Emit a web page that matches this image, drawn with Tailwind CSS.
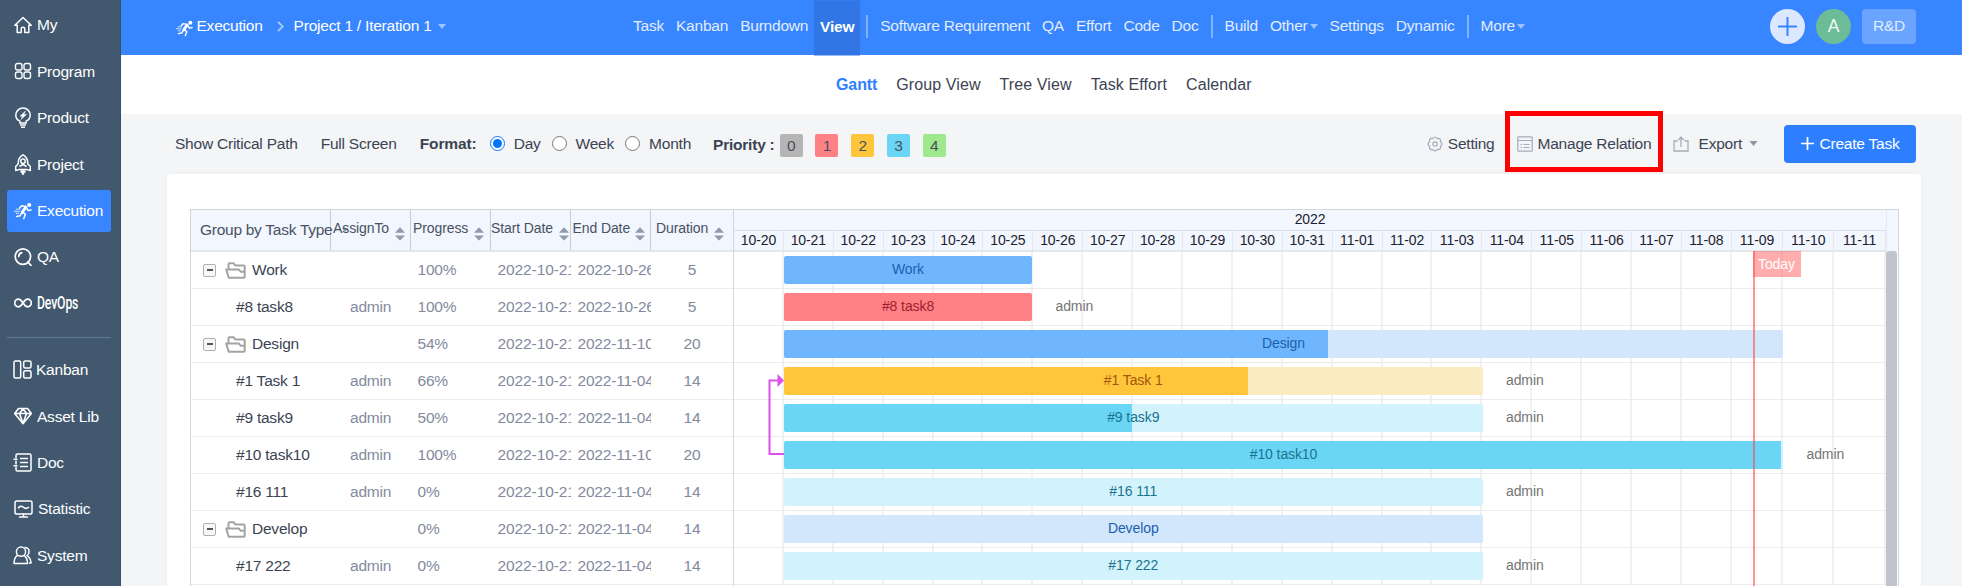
<!DOCTYPE html>
<html lang="en">
<head>
    <meta charset="UTF-8">
    <meta name="viewport" content="width=device-width, initial-scale=1.0">
    <title>Gantt - Project 1 / Iteration 1</title>
    <script src="https://cdn.jsdelivr.net/npm/@tailwindcss/browser@4"></script>
</head>
<body class="bg-[#f3f5f7] font-['Liberation_Sans',Arial,sans-serif] text-[15.5px] tracking-[-0.22px] text-[#3c4353] h-[586px] overflow-hidden">
    <!-- Shared icons -->
    <svg class="hidden">
        <symbol id="icon-run" viewBox="0 0 18 18">
            <circle cx="15.2" cy="3" r="2.1" fill="currentColor"/>
            <path d="M11.8 5.2 8.2 10.4" fill="none" stroke="currentColor" stroke-width="3" stroke-linecap="round"/>
            <path d="M11.6 4.6 7.6 3.8 5.6 6M12.6 6l1.600 2.600 2.800-.6M9 10.400l2.400 2-1.600 4.200M7.800 11 6 13.800l-3.400.6" fill="none" stroke="currentColor" stroke-width="1.500" stroke-linecap="round" stroke-linejoin="round"/>
            <path d="M1.800 7.200h4.400M0 9.300h5.800M2 11.400h3" stroke="currentColor" stroke-width=".8"/>
        </symbol>
        <symbol id="icon-sort" viewBox="0 0 10 14">
            <path d="M5 .3 10 5.800H0zM5 13.500 10 8.400H0z" fill="#8f9aac"/>
        </symbol>
        <symbol id="icon-caret" viewBox="0 0 8 5">
            <path d="M0 0h8L4 5z" fill="currentColor"/>
        </symbol>
        <symbol id="icon-folder" viewBox="0 0 21 17">
            <path d="M3.500 7.200V2.300q0-1 1-1h4.200l1.800 2.200h8q1.200 0 1.200 1v10.200q0 1-1 1H3.700L1.200 7.400h12.600l2 2.400h3.700" fill="none" stroke="#a3a3a3" stroke-width="2" stroke-linejoin="round"/>
        </symbol>
    </svg>

    <div class="flex h-full">
        <!-- Sidebar -->
        <aside class="w-[120.5px] shrink-0 bg-[#41586f] border-r border-[#36506b] text-white px-[7px] pt-1">
            <nav class="flex flex-col gap-[4.4px]">
                <a class="flex h-[42px] items-center gap-[5px] pl-[7px]">
                    <svg class="size-[18px]" viewBox="0 0 18 18" fill="none" stroke="currentColor" stroke-width="1.5" stroke-linejoin="round" stroke-linecap="round"><path d="M.8 9.300 9 1.500l8.200 7.800h-2.400v7.200h-4v-3.700q0-1.600-1.800-1.600t-1.800 1.600v3.700h-4V9.300z"/></svg>My
                </a>
                <a class="flex h-[42px] items-center gap-[5px] pl-[7px]">
                    <svg class="size-[18px]" viewBox="0 0 18 18" fill="none" stroke="currentColor" stroke-width="1.4"><rect x="1.500" y="1.500" width="6.500" height="6.500" rx="2"/><rect x="10" y="1.500" width="6.500" height="6.500" rx="2"/><rect x="1.500" y="10" width="6.500" height="6.500" rx="2"/><rect x="10" y="10" width="6.500" height="6.500" rx="2"/></svg>Program
                </a>
                <a class="flex h-[42px] items-center gap-[5px] pl-[7px]">
                    <svg class="h-[21px] w-[18px]" viewBox="0 0 18 21" fill="none" stroke="currentColor" stroke-width="1.5"><path d="M5.900 16v-1.800Q1.800 12.200 1.800 8.200A7.200 7.200 0 0 1 16.200 8.200q0 4-4.100 6V16z"/><path d="M6 18h6M7 20.200h4" stroke-width="1.600"/><path d="M11.500 4 6 9.200h2.600L7 12.400l5.600-5H9.800z" fill="currentColor" stroke-width=".5"/></svg>Product
                </a>
                <a class="flex h-[42px] items-center gap-[5px] pl-[7px]">
                    <svg class="h-[21px] w-[18px]" viewBox="0 0 18 21" fill="none" stroke="currentColor" stroke-width="1.500" stroke-linejoin="round"><path d="M9 .8Q4.300 3.400 4.300 8.200v1.600L1.700 12.500v4L5 15.600h8l3.300.9v-4l-2.600-2.700V8.200Q13.700 3.400 9 .8z"/><circle cx="9" cy="7.200" r="2.200"/><path d="M5.400 12.500 9 10.500l3.600 2"/><path d="M6.500 17.500h5M9 17.500v3.200" stroke-width="2.400"/></svg>Project
                </a>
                <a class="flex h-[42px] w-[104px] items-center gap-[5px] rounded-[3px] bg-[#3785ff] pl-[7px]">
                    <svg class="size-[18px]"><use href="#icon-run"/></svg>Execution
                </a>
                <a class="flex h-[42px] items-center gap-[5px] pl-[7px]">
                    <svg class="size-[18px]" viewBox="0 0 18 18" fill="none" stroke="currentColor" stroke-width="1.700" stroke-linecap="round"><circle cx="8.900" cy="8.600" r="7.700"/><path d="m13.800 14 3.200 3.300M4.700 8.400q.2-3 3-3.800" /></svg>QA
                </a>
                <a class="flex h-[42px] items-center gap-[5px] pl-[7px]">
                    <svg class="h-[10px] w-[18px] shrink-0" viewBox="0 0 18 10" fill="none" stroke="currentColor" stroke-width="1.700"><path d="M9 5Q6.500 1.200 4.300 1.200a3.600 3.800 0 0 0 0 7.600Q6.500 8.800 9 5t4.700-3.800a3.600 3.800 0 0 1 0 7.600Q11.500 8.800 9 5z"/></svg>
                    <span class="origin-left scale-x-[0.7] font-['Roboto',sans-serif] text-[17.5px] font-medium">DevOps</span>
                </a>
            </nav>
            <div class="mt-[12.6px] mb-[11px] h-px w-[104px] bg-[#627a93]"></div>
            <nav class="flex flex-col gap-[4.4px]">
                <a class="flex h-[42px] items-center gap-1 pl-1.5">
                    <svg class="size-[19px]" viewBox="0 0 19 19" fill="none" stroke="currentColor" stroke-width="1.500"><rect x="1" y="1" width="6.700" height="17" rx="1.500"/><rect x="10.700" y="1" width="7.300" height="7" rx="1.500"/><rect x="10.700" y="10.700" width="7.300" height="7.300" rx="1.500"/></svg>Kanban
                </a>
                <a class="flex h-[42px] items-center gap-[5px] pl-[7px]">
                    <svg class="size-[18px]" viewBox="0 0 18 18" fill="none" stroke="currentColor" stroke-width="1.600" stroke-linejoin="round"><path d="M4.500 1.500h9L17.300 6.500 9 16.700.7 6.500zM1 6.500h16M9 16.500 5.500 6.500 9 1.700l3.500 4.800z"/></svg>Asset Lib
                </a>
                <a class="flex h-[42px] items-center gap-[5px] pl-[6px]">
                    <svg class="size-[19px]" viewBox="0 0 19 19" fill="none" stroke="currentColor" stroke-width="1.500"><path d="M3 5V2.500Q3 1 4.500 1h12Q18 1 18 2.500v14q0 1.500-1.500 1.500h-12Q3 18 3 16.500V14M3 7.500v4M.5 6.200h4M.5 12.800h4M7 5.500h8M7 9.500h8M7 13.500h8"/></svg>Doc
                </a>
                <a class="flex h-[42px] items-center gap-[5px] pl-[7px]">
                    <svg class="h-[18px] w-[19px]" viewBox="0 0 19 18" fill="none" stroke="currentColor" stroke-width="1.500" stroke-linecap="round"><rect x="1" y="1" width="17" height="13" rx="1.800"/><path d="M4.500 7.800q2.200-2.800 4.600-.8 2.800 2.600 5.400.2M9.500 14v2.800M5.500 17h8"/></svg>Statistic
                </a>
                <a class="flex h-[42px] items-center gap-[5px] pl-[6px]">
                    <svg class="size-[19px]" viewBox="0 0 19 19" fill="none" stroke="currentColor" stroke-width="1.500" stroke-linejoin="round"><circle cx="8" cy="5.700" r="4.600"/><path d="M4.700 9.200Q1 11.500 1 17.500h13.500q0-6-4-8.300M11.500 1.600q4.400 0 4.600 3.900 0 2.600-2 4.200 3.500 2.200 4 7.300H16"/></svg>System
                </a>
            </nav>
        </aside>

        <main class="flex min-w-0 flex-1 flex-col">
            <!-- Header -->
            <header class="flex h-[55px] shrink-0 items-center bg-[#3785ff] pb-[3px] text-[#e1ecff]">
                <div class="flex w-[512.5px] shrink-0 items-center pl-[55px] text-white">
                    <svg class="mt-1 mr-1 size-[17px]"><use href="#icon-run"/></svg>
                    <span>Execution</span>
                    <svg class="ml-[14px] mr-[10px] h-[11px] w-[7px]" viewBox="0 0 7 11" fill="none" stroke="#a9caff" stroke-width="1.800"><path d="m1 .8 4.800 4.700L1 10.200"/></svg>
                    <span>Project 1 / Iteration 1</span>
                    <svg class="ml-1.5 h-[5px] w-2 text-[#9cc2ff]"><use href="#icon-caret"/></svg>
                </div>
                <nav class="flex h-[52px] items-center gap-[12px] whitespace-nowrap">
                    <a>Task</a>
                    <a>Kanban</a>
                    <a>Burndown</a>
                    <a class="-mx-[6px] flex h-[55px] w-[46px] translate-y-[1.5px] items-center justify-center bg-[#3176e4] pb-[3px] font-bold text-white">View</a>
                    <span class="h-[23px] w-0.5 bg-[#83b2ff]"></span>
                    <a>Software Requirement</a>
                    <a>QA</a>
                    <a>Effort</a>
                    <a>Code</a>
                    <a>Doc</a>
                    <span class="h-[23px] w-0.5 bg-[#83b2ff]"></span>
                    <a>Build</a>
                    <a class="flex items-center gap-0.5">Other<svg class="h-[5px] w-2 text-[#9cc2ff]"><use href="#icon-caret"/></svg></a>
                    <a>Settings</a>
                    <a>Dynamic</a>
                    <span class="h-[23px] w-0.5 bg-[#83b2ff]"></span>
                    <a class="flex items-center gap-0.5">More<svg class="h-[5px] w-2 text-[#9cc2ff]"><use href="#icon-caret"/></svg></a>
                </nav>
                <div class="ml-auto flex items-center gap-[11px] pr-[46px]">
                    <span class="flex size-[35px] items-center justify-center rounded-full bg-[#dbe8ff]">
                        <svg class="size-[19px]" viewBox="0 0 19 19" stroke="#3785ff" stroke-width="2"><path d="M9.500 0v19M0 9.500h19"/></svg>
                    </span>
                    <span class="flex size-[35px] items-center justify-center rounded-full bg-[#6cbc97] text-[17.5px] text-[#eef8f3]">A</span>
                    <span class="flex h-[35px] w-[54px] items-center justify-center rounded bg-[#6ba4ff]">R&amp;D</span>
                </div>
            </header>

            <!-- Sub navigation -->
            <nav class="flex h-[59px] shrink-0 items-center gap-[19px] bg-white pl-[715.5px] text-base tracking-[0.1px]">
                <a class="font-bold tracking-[-0.1px] text-[#2e7fff]">Gantt</a>
                <a>Group View</a>
                <a>Tree View</a>
                <a>Task Effort</a>
                <a>Calendar</a>
            </nav>

            <!-- Toolbar -->
            <div class="flex h-[60px] shrink-0 items-center whitespace-nowrap pr-[46px] pb-px pl-[54.5px]">
                <a>Show Critical Path</a>
                <a class="ml-[23px]">Full Screen</a>
                <b class="ml-[23px] tracking-[-0.1px]">Format:</b>
                <span class="ml-[13px] flex size-[15px] items-center justify-center rounded-full border-[1.500px] border-[#0b76ff] bg-white"><span class="size-[9px] rounded-full bg-[#0075ff]"></span></span>
                <span class="ml-[9px]">Day</span>
                <span class="ml-[11px] size-[15px] rounded-full border border-[#767676] bg-white"></span>
                <span class="ml-[9px]">Week</span>
                <span class="ml-[11px] size-[15px] rounded-full border border-[#767676] bg-white"></span>
                <span class="ml-[9px]">Month</span>
                <b class="ml-[22px] pt-0.5">Priority :</b>
                <div class="ml-[5px] flex gap-[12.800px] pt-[3px] leading-[23px] text-[#4a4f5c]">
                    <span class="w-[23px] rounded-[2px] bg-[#b5b5b5] text-center">0</span>
                    <span class="w-[23px] rounded-[2px] bg-[#ff8085] text-center">1</span>
                    <span class="w-[23px] rounded-[2px] bg-[#ffc63c] text-center">2</span>
                    <span class="w-[23px] rounded-[2px] bg-[#6ad5f5] text-center">3</span>
                    <span class="w-[23px] rounded-[2px] bg-[#9fe88d] text-center">4</span>
                </div>

                <div class="ml-auto flex items-center">
                    <svg class="mr-[5px] size-4" viewBox="0 0 16 16" fill="none" stroke="#a5acb9" stroke-width="1.200" stroke-linejoin="round"><path d="M13.450 10.260Q14.080 14.080 10.260 13.450 8 16.600 5.740 13.450 1.920 14.080 2.550 10.260-.6 8 2.550 5.740 1.920 1.920 5.740 2.550 8-.6 10.260 2.550 14.080 1.920 13.450 5.740 16.600 8 13.450 10.260z"/><circle cx="8" cy="8" r="2.200"/></svg>
                    <span>Setting</span>
                    <div class="-mt-[4px] ml-[10px] flex h-[61px] w-[158px] items-center border-5 border-[#fe0000] pt-[4px] pl-[7px]">
                        <svg class="mr-[5px] size-4" viewBox="0 0 16 16" fill="none" stroke="#a5acb9" stroke-width="1.200"><rect x=".8" y=".8" width="14.400" height="14.400" rx="1"/><path d="M1 4.500h14M3.500 8.500h1.500M6.500 8.500h6M3.500 11.500h1.500M6.500 11.500h6"/></svg>
                        <span>Manage Relation</span>
                    </div>
                    <svg class="ml-[10px] mr-[10px] size-4" viewBox="0 0 16 16" fill="none" stroke="#a5acb9" stroke-width="1.300"><path d="M4.500 5H1v10h14V5h-3.500M8 11V1.200M5.200 4 8 1.200 10.800 4"/></svg>
                    <span>Export</span>
                    <svg class="ml-[7px] h-[5px] w-[9px] text-[#8f97a6]"><use href="#icon-caret"/></svg>
                    <button class="ml-[26px] flex h-[38px] w-[132px] items-center justify-center gap-1.5 rounded bg-[#2e7fff] tracking-[-0.22px] text-white">
                        <svg class="size-[13px]" viewBox="0 0 13 13" stroke="currentColor" stroke-width="1.700"><path d="M6.500 0v13M0 6.500h13"/></svg>
                        Create Task
                    </button>
                </div>
            </div>

            <!-- Gantt card -->
            <section class="ml-[46.5px] mr-[41px] min-h-0 flex-1 overflow-hidden rounded-t bg-white pt-[35px] pr-[22px] pl-[23px] shadow-[0_0_6px_rgba(0,0,0,0.05)]">
                <div class="flex h-[400px] border border-[#d3d6db]">
                    <!-- Left grid -->
                    <div class="w-[543px] shrink-0 border-r border-[#d3d6db]">
                        <div class="flex h-[42px] border-b-2 border-[#e4e6ea] bg-[#f1f6ff] text-[14px] tracking-[-0.1px] whitespace-nowrap text-[#4a5162]">
                            <div class="flex w-[140px] shrink-0 items-center border-r border-[#c9cbd0] pl-[9px] text-[15.5px] tracking-[-0.27px]">
                                <span>Group by Task Type</span>
                                <svg class="ml-[9px] h-1 w-2 shrink-0 text-[#8f97a6]"><use href="#icon-caret"/></svg>
                            </div>
                            <div class="flex w-[80px] shrink-0 items-center gap-1.5 border-r border-[#c9cbd0] pt-0.5 pl-[2px]"><span class="-mt-1.5">AssignTo</span><svg class="mt-1.5 h-[14px] w-[10px] shrink-0"><use href="#icon-sort"/></svg></div>
                            <div class="flex w-[80px] shrink-0 items-center gap-1.5 border-r border-[#c9cbd0] pt-0.5 pl-[2px]"><span class="-mt-1.5">Progress</span><svg class="mt-1.5 h-[14px] w-[10px] shrink-0"><use href="#icon-sort"/></svg></div>
                            <div class="flex w-[80px] shrink-0 items-center gap-1.5 border-r border-[#c9cbd0] pt-0.5"><span class="-mt-1.5">Start Date</span><svg class="mt-1.5 h-[14px] w-[10px] shrink-0"><use href="#icon-sort"/></svg></div>
                            <div class="flex w-[80px] shrink-0 items-center gap-[5px] border-r border-[#c9cbd0] pt-0.5 pl-[1.500px]"><span class="-mt-1.5">End Date</span><svg class="mt-1.5 h-[14px] w-[10px] shrink-0"><use href="#icon-sort"/></svg></div>
                            <div class="flex flex-1 items-center gap-1.5 pt-0.5 pl-[5px]"><span class="-mt-1.5">Duration</span><svg class="mt-1.5 h-[14px] w-[10px] shrink-0"><use href="#icon-sort"/></svg></div>
                        </div>
                        <div id="gridRows"></div>
                    </div>

                    <!-- Timeline -->
                    <div class="w-[1152px] shrink-0">
                        <div class="h-[42px] border-b-2 border-[#e4e6ea] bg-[#f1f6ff] text-[14px] tracking-[-0.1px] text-[#1d222c]">
                            <div class="h-[21px] border-b border-[#dcdfe4] text-center leading-[18px]">2022</div>
                            <div id="scaleDays" class="flex h-[19px] text-center leading-[19px]"></div>
                        </div>
                        <div class="relative h-[333px] text-[14px] tracking-[-0.1px]">
                            <div id="columns" class="absolute inset-0 flex"></div>
                            <div id="timelineRows" class="relative"></div>
                            <svg class="absolute top-[111px] left-[30px] h-[100px] w-5" viewBox="0 0 20 100">
                                <path d="M20 91H5.500V17.500H14" fill="none" stroke="#dd50ea" stroke-width="2"/>
                                <path d="m13.500 11 6.500 6.500-6.500 6.500z" fill="#dd50ea"/>
                            </svg>
                            <div class="absolute -top-px left-[1018.500px] h-[336px] w-[2.300px] bg-[#ff4040]/55"></div>
                            <div class="absolute -top-px left-[1019px] h-[26px] w-[48px] bg-[#ff5c5c]/50 pl-[5px] leading-[27px] text-white">Today</div>
                        </div>
                    </div>

                    <!-- Scrollbar -->
                    <div class="flex-1">
                        <div class="h-[41px] border-l border-[#e6e9ee] bg-[#f1f6ff]"></div>
                        <div class="h-[360px] w-[11px] rounded-t-[3px] bg-[#c1c4cd]"></div>
                    </div>
                </div>
            </section>
        </main>
    </div>

    <script>
        const colors = {
            group: { bar: 'bg-[#d2e6fc]', done: 'bg-[#6fb6ff]', text: 'text-[#1c5fad]' },
            p1: { bar: 'bg-[#ffd4d6]', done: 'bg-[#ff8085]', text: 'text-[#9c1f2e]' },
            p2: { bar: 'bg-[#fbebc1]', done: 'bg-[#ffc63c]', text: 'text-[#a1560b]' },
            p3: { bar: 'bg-[#d2f3fc]', done: 'bg-[#6ad5f5]', text: 'text-[#197490]' }
        };

        // width and done are pixels on the timeline
        const tasks = [
            { name: 'Work', group: true, progress: '100%', end: '2022-10-26', days: 5, color: 'group', width: 248, done: 248 },
            { name: '#8 task8', progress: '100%', end: '2022-10-26', days: 5, color: 'p1', width: 248, done: 248 },
            { name: 'Design', group: true, progress: '54%', end: '2022-11-10', days: 20, color: 'group', width: 999, done: 544 },
            { name: '#1 Task 1', progress: '66%', end: '2022-11-04', days: 14, color: 'p2', width: 698.5, done: 464 },
            { name: '#9 task9', progress: '50%', end: '2022-11-04', days: 14, color: 'p3', width: 698.5, done: 348 },
            { name: '#10 task10', progress: '100%', end: '2022-11-10', days: 20, color: 'p3', width: 999, done: 997 },
            { name: '#16 111', progress: '0%', end: '2022-11-04', days: 14, color: 'p3', width: 698.5, done: 0 },
            { name: 'Develop', group: true, progress: '0%', end: '2022-11-04', days: 14, color: 'group', width: 698.5, done: 0 },
            { name: '#17 222', progress: '0%', end: '2022-11-04', days: 14, color: 'p3', width: 698.5, done: 0 }
        ];

        document.getElementById('gridRows').innerHTML = tasks.map(t => `
            <div class="flex h-[37px] items-center border-b border-[#ebebeb] whitespace-nowrap text-[#838a9d]">
                <div class="flex w-[140px] shrink-0 items-center text-[#3c4353] ${t.group ? 'pl-3' : 'pl-[45px]'}">
                    ${t.group ? `
                    <span class="flex size-[13px] items-center justify-center rounded-[2px] border-[1.500px] border-[#b0b0b0] bg-[#f7f7f7]"><span class="h-[1.500px] w-[6px] bg-[#555]"></span></span>
                    <svg class="ml-[9px] mr-[6px] h-[17px] w-[21px]"><use href="#icon-folder"/></svg>` : ''}
                    <span>${t.name}</span>
                </div>
                <div class="w-[80px] shrink-0 pl-[19px]">${t.group ? '' : 'admin'}</div>
                <div class="w-[80px] shrink-0 pl-[6.500px]">${t.progress}</div>
                <div class="w-[79.5px] shrink-0 overflow-hidden pl-[6.500px] tracking-[-0.1px]">2022-10-21</div>
                <div class="w-[80.5px] shrink-0 overflow-hidden pl-[7px] tracking-[-0.2px]">${t.end}</div>
                <div class="flex-1 text-center">${t.days}</div>
            </div>`).join('');

        document.getElementById('timelineRows').innerHTML = tasks.map(t => `
            <div class="flex h-[37px] border-b border-[#ebebeb] pt-1 pl-[50px]">
                <div class="relative h-7 shrink-0 overflow-hidden rounded-[2px] ${colors[t.color].bar}" style="width: ${t.width}px">
                    <div class="h-full ${colors[t.color].done}" style="width: ${t.done}px"></div>
                    <span class="absolute inset-0 text-center leading-[26px] ${colors[t.color].text}">${t.name}</span>
                </div>
                ${t.group ? '' : '<span class="ml-[23.5px] leading-[26px] text-[#757575]">admin</span>'}
            </div>`).join('');

        const days = ['10-20', '10-21', '10-22', '10-23', '10-24', '10-25', '10-26', '10-27', '10-28', '10-29', '10-30', '10-31',
            '11-01', '11-02', '11-03', '11-04', '11-05', '11-06', '11-07', '11-08', '11-09', '11-10', '11-11'];
        const dayWidth = i => i < 20 ? 49.9 : 51.3;

        document.getElementById('scaleDays').innerHTML = days.map((d, i) =>
            `<div class="shrink-0 border-r border-[#e4e8ee]" style="width: ${dayWidth(i)}px">${d}</div>`).join('');
        document.getElementById('columns').innerHTML = days.map((d, i) =>
            `<div class="shrink-0 border-r-2 border-[#f1f1f1]" style="width: ${dayWidth(i)}px"></div>`).join('');
    </script>
</body>
</html>
